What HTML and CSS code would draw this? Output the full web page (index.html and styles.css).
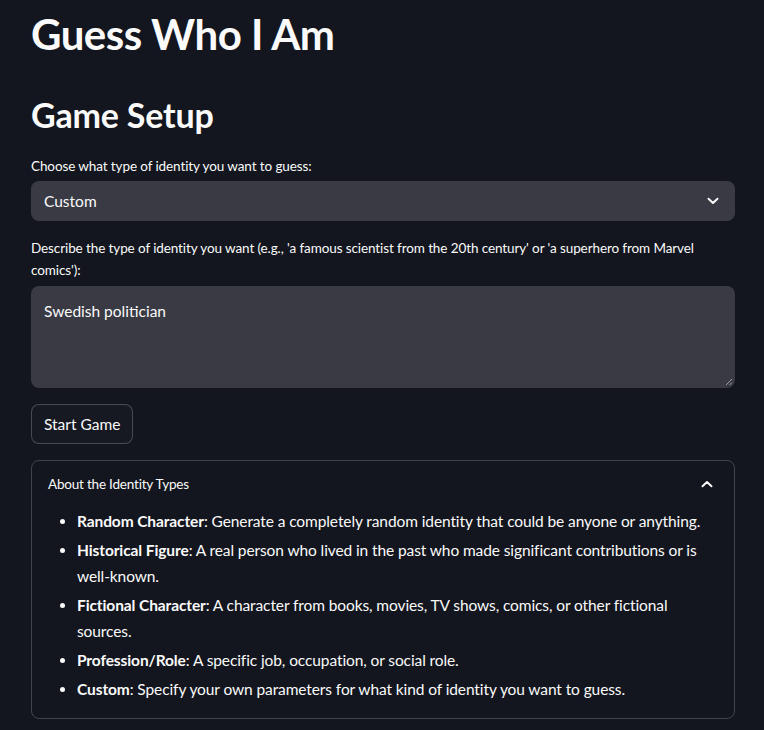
FILE: index.html
```html
<!DOCTYPE html>
<html>
<head>
<meta charset="utf-8">
<link rel="stylesheet" href="styles.css">
</head>
<body>
<main class="main">
  <h1 class="title">Guess Who I Am</h1>
  <h2 class="subtitle">Game Setup</h2>

  <div class="field field-first">
    <label class="label">Choose what type of identity you want to guess:</label>
    <div class="select">
      <span class="select-value">Custom</span>
      <svg class="chev" width="12" height="8" viewBox="0 0 12 8"><path d="M1.5 1.8 L6 6 L10.5 1.8" fill="none" stroke="#fafafa" stroke-width="2" stroke-linecap="round" stroke-linejoin="round"/></svg>
    </div>
  </div>

  <div class="field field-text">
    <label class="label">Describe the type of identity you want (e.g., 'a famous scientist from the 20th century' or 'a superhero from Marvel comics'):</label>
    <div class="textarea">
      <span>Swedish politician</span>
      <svg class="grip" width="8" height="8" viewBox="0 0 8 8"><path d="M7 1 L1 7 M7 4.5 L4.5 7" stroke="#9a9aa2" stroke-width="1"/></svg>
    </div>
  </div>

  <button class="btn">Start Game</button>

  <section class="expander">
    <div class="exp-head">
      <span>About the Identity Types</span>
      <svg width="12" height="8" viewBox="0 0 12 8"><path d="M1.5 6.2 L6 2 L10.5 6.2" fill="none" stroke="#fafafa" stroke-width="2" stroke-linecap="round" stroke-linejoin="round"/></svg>
    </div>
    <ul class="list">
      <li><b>Random Character</b>: Generate a completely random identity that could be anyone or anything.</li>
      <li><b>Historical Figure</b>: A real person who lived in the past who made significant contributions or is well-known.</li>
      <li><b>Fictional Character</b>: A character from books, movies, TV shows, comics, or other fictional sources.</li>
      <li><b>Profession/Role</b>: A specific job, occupation, or social role.</li>
      <li><b>Custom</b>: Specify your own parameters for what kind of identity you want to guess.</li>
    </ul>
  </section>
</main>
</body>
</html>
```
FILE: styles.css
```css
html, body {
  margin: 0;
  padding: 0;
  background: #13161e;
  color: #fafafa;
  font-family: Lato, "Noto Sans", sans-serif;
}
.main {
  padding: 7px 29px 0 31px;
}
.title {
  font-size: 42px;
  font-weight: 700;
  line-height: 54px;
  margin: 0;
  letter-spacing: -0.5px;
}
.subtitle {
  font-size: 34px;
  font-weight: 700;
  line-height: 40px;
  margin: 34px 0 0 0;
  letter-spacing: -0.2px;
}
.field-first {
  margin-top: 20px;
}
.label {
  display: block;
  font-size: 13.5px;
  line-height: 22px;
  margin-bottom: 4px;
  letter-spacing: -0.1px;
}
.field-text .label {
  margin-bottom: 5px;
}
.select {
  height: 40px;
  background: #393a44;
  border-radius: 8px;
  display: flex;
  align-items: center;
  justify-content: space-between;
  padding: 0 16px 0 13px;
  font-size: 15.5px;
}
.field-text {
  margin-top: 16px;
}
.textarea {
  position: relative;
  height: 102px;
  background: #393a44;
  border-radius: 8px;
  padding: 14px 13px;
  box-sizing: border-box;
  font-size: 15.5px;
  line-height: 22px;
}
.grip {
  position: absolute;
  right: 2px;
  bottom: 2px;
}
.btn {
  display: block;
  margin-top: 16px;
  height: 40px;
  padding: 0 12px;
  background: #161922;
  color: #fafafa;
  border: 1px solid rgba(250,250,250,0.22);
  border-radius: 8px;
  font-family: inherit;
  font-size: 15.5px;
}
.expander {
  margin-top: 16px;
  border: 1px solid rgba(250,250,250,0.2);
  border-radius: 8px;
  padding: 0 0 13px 0;
}
.exp-head {
  display: flex;
  justify-content: space-between;
  align-items: center;
  height: 46px;
  padding: 0 21px 0 16px;
  font-size: 13.5px;
  letter-spacing: -0.2px;
}
.list {
  margin: 0;
  padding: 0 16px 0 45px;
  font-size: 15.5px;
  line-height: 26px;
  letter-spacing: -0.1px;
}
.list li {
  margin: 3px 0;
}
.list li:first-child {
  margin-top: 1px;
}
.list b {
  font-weight: 700;
}
```
